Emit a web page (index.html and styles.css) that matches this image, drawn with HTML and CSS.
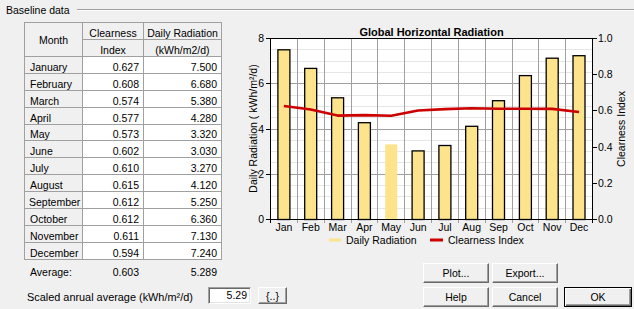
FILE: index.html
```html
<!DOCTYPE html>
<html>
<head>
<meta charset="utf-8">
<link rel="stylesheet" href="styles.css">
</head>
<body>
<div class="dialog">
  <div class="group-head"><span class="group-title">Baseline data</span><div class="rule"></div></div>
  <div class="top">
    <div class="left">
      <div class="grid">
        <div class="cell fixed span2 center">Month</div>
        <div class="cell fixed center">Clearness</div>
        <div class="cell fixed center">Daily Radiation</div>
        <div class="cell fixed center">Index</div>
        <div class="cell fixed center">(kWh/m2/d)</div>

        <div class="cell fixed">January</div><div class="cell num">0.627</div><div class="cell num">7.500</div>
        <div class="cell fixed">February</div><div class="cell num">0.608</div><div class="cell num">6.680</div>
        <div class="cell fixed">March</div><div class="cell num">0.574</div><div class="cell num">5.380</div>
        <div class="cell fixed">April</div><div class="cell num">0.577</div><div class="cell num">4.280</div>
        <div class="cell fixed">May</div><div class="cell num">0.573</div><div class="cell num">3.320</div>
        <div class="cell fixed">June</div><div class="cell num">0.602</div><div class="cell num">3.030</div>
        <div class="cell fixed">July</div><div class="cell num">0.610</div><div class="cell num">3.270</div>
        <div class="cell fixed">August</div><div class="cell num">0.615</div><div class="cell num">4.120</div>
        <div class="cell fixed clip">September</div><div class="cell num">0.612</div><div class="cell num">5.250</div>
        <div class="cell fixed">October</div><div class="cell num">0.612</div><div class="cell num">6.360</div>
        <div class="cell fixed">November</div><div class="cell num">0.611</div><div class="cell num">7.130</div>
        <div class="cell fixed">December</div><div class="cell num">0.594</div><div class="cell num">7.240</div>
      </div>
    </div>
    <svg class="chart" width="394" height="239" viewBox="240 20 394 239" xmlns="http://www.w3.org/2000/svg">
      <text class="ctitle" x="431.5" y="36" text-anchor="middle">Global Horizontal Radiation</text>
      <rect x="270.5" y="38.5" width="322" height="181" fill="#ffffff"/>
      <g stroke="#e6e6e6" stroke-width="1">
        <line x1="271" y1="208.5" x2="592" y2="208.5"/>
        <line x1="271" y1="196.5" x2="592" y2="196.5"/>
        <line x1="271" y1="185.5" x2="592" y2="185.5"/>
        <line x1="271" y1="162.5" x2="592" y2="162.5"/>
        <line x1="271" y1="151.5" x2="592" y2="151.5"/>
        <line x1="271" y1="140.5" x2="592" y2="140.5"/>
        <line x1="271" y1="117.5" x2="592" y2="117.5"/>
        <line x1="271" y1="106.5" x2="592" y2="106.5"/>
        <line x1="271" y1="95.5" x2="592" y2="95.5"/>
        <line x1="271" y1="72.5" x2="592" y2="72.5"/>
        <line x1="271" y1="61.5" x2="592" y2="61.5"/>
        <line x1="271" y1="49.5" x2="592" y2="49.5"/>
      </g>
      <g stroke="#a0a0a0" stroke-width="1">
        <line x1="271" y1="174.5" x2="592" y2="174.5"/>
        <line x1="271" y1="129.5" x2="592" y2="129.5"/>
        <line x1="271" y1="83.5" x2="592" y2="83.5"/>
        <line x1="297.5" y1="39" x2="297.5" y2="223"/>
        <line x1="324.5" y1="39" x2="324.5" y2="223"/>
        <line x1="351.5" y1="39" x2="351.5" y2="223"/>
        <line x1="377.5" y1="39" x2="377.5" y2="223"/>
        <line x1="404.5" y1="39" x2="404.5" y2="223"/>
        <line x1="431.5" y1="39" x2="431.5" y2="223"/>
        <line x1="458.5" y1="39" x2="458.5" y2="223"/>
        <line x1="485.5" y1="39" x2="485.5" y2="223"/>
        <line x1="512.5" y1="39" x2="512.5" y2="223"/>
        <line x1="538.5" y1="39" x2="538.5" y2="223"/>
        <line x1="565.5" y1="39" x2="565.5" y2="223"/>
      </g>
      <g fill="#fde38b" stroke="#000" stroke-width="1.3">
        <rect x="277.9" y="49.8" width="12" height="169.7"/>
        <rect x="304.7" y="68.4" width="12" height="151.1"/>
        <rect x="331.6" y="97.8" width="12" height="121.7"/>
        <rect x="358.4" y="122.7" width="12" height="96.8"/>
        <rect x="385.2" y="144.4" width="12" height="75.1" stroke="none"/>
        <rect x="412.1" y="150.9" width="12" height="68.6"/>
        <rect x="438.9" y="145.5" width="12" height="74.0"/>
        <rect x="465.7" y="126.3" width="12" height="93.2"/>
        <rect x="492.5" y="100.7" width="12" height="118.8"/>
        <rect x="519.4" y="75.6" width="12" height="143.9"/>
        <rect x="546.2" y="58.2" width="12" height="161.3"/>
        <rect x="573.0" y="55.7" width="12" height="163.8"/>
      </g>
      <polyline fill="none" stroke="#cc0000" stroke-width="2.6" stroke-linejoin="round"
        points="283.9,106 310.7,109.5 337.6,115.6 364.4,115.1 391.2,115.8 418.1,110.5 444.9,109.1 471.7,108.2 498.5,108.7 525.4,108.7 552.2,108.9 579,112"/>
      <rect x="270.5" y="38.5" width="322" height="181" fill="none" stroke="#000" stroke-width="1"/>
      <g stroke="#000" stroke-width="1">
        <line x1="266" y1="219.5" x2="270.5" y2="219.5"/>
        <line x1="266" y1="174.5" x2="270.5" y2="174.5"/>
        <line x1="266" y1="129.5" x2="270.5" y2="129.5"/>
        <line x1="266" y1="83.5" x2="270.5" y2="83.5"/>
        <line x1="266" y1="38.5" x2="270.5" y2="38.5"/>
        <line x1="592.5" y1="219.5" x2="597" y2="219.5"/>
        <line x1="592.5" y1="183.5" x2="597" y2="183.5"/>
        <line x1="592.5" y1="147.5" x2="597" y2="147.5"/>
        <line x1="592.5" y1="110.5" x2="597" y2="110.5"/>
        <line x1="592.5" y1="74.5" x2="597" y2="74.5"/>
        <line x1="592.5" y1="38.5" x2="597" y2="38.5"/>
        <line x1="270.5" y1="219.5" x2="270.5" y2="223"/>
        <line x1="592.5" y1="219.5" x2="592.5" y2="223"/>
      </g>
      <g class="clabel" text-anchor="end">
        <text x="264" y="223.3">0</text>
        <text x="264" y="178.3">2</text>
        <text x="264" y="133.3">4</text>
        <text x="264" y="87.3">6</text>
        <text x="264" y="42.3">8</text>
      </g>
      <g class="clabel">
        <text x="598" y="223.3">0.0</text>
        <text x="598" y="187.3">0.2</text>
        <text x="598" y="151.3">0.4</text>
        <text x="598" y="114.3">0.6</text>
        <text x="598" y="78.3">0.8</text>
        <text x="598" y="42.3">1.0</text>
      </g>
      <g class="clabel" text-anchor="middle">
        <text x="283.9" y="231">Jan</text>
        <text x="310.7" y="231">Feb</text>
        <text x="337.6" y="231">Mar</text>
        <text x="364.4" y="231">Apr</text>
        <text x="391.2" y="231">May</text>
        <text x="418.1" y="231">Jun</text>
        <text x="444.9" y="231">Jul</text>
        <text x="471.7" y="231">Aug</text>
        <text x="498.5" y="231">Sep</text>
        <text x="525.4" y="231">Oct</text>
        <text x="552.2" y="231">Nov</text>
        <text x="579" y="231">Dec</text>
      </g>
      <text class="clabel" text-anchor="middle" transform="translate(256.5,128.5) rotate(-90)">Daily Radiation ( kWh/m²/d)</text>
      <text class="clabel" text-anchor="middle" transform="translate(625,129) rotate(-90)">Clearness Index</text>
      <line x1="329" y1="240" x2="341" y2="240" stroke="#fde38b" stroke-width="3"/>
      <text class="clabel" x="346" y="244">Daily Radiation</text>
      <line x1="430" y1="240" x2="443" y2="240" stroke="#cc0000" stroke-width="3"/>
      <text class="clabel" x="448" y="244">Clearness Index</text>
    </svg>
  </div>
  <div class="bottom">
    <div class="avg">
      <div class="avg-label">Average:</div>
      <div class="avg-num">0.603</div>
      <div class="avg-num">5.289</div>
    </div>
    <div class="scaled">
      <span class="scaled-label">Scaled anrual average (kWh/m²/d)</span>
      <div class="edit">5.29</div>
      <div class="btn small">{..}</div>
    </div>
    <div class="buttons">
      <div class="btn">Plot...</div>
      <div class="btn">Export...</div>
      <div class="empty"></div>
      <div class="btn">Help</div>
      <div class="btn">Cancel</div>
      <div class="btn default">OK</div>
    </div>
  </div>
</div>
</body>
</html>
```

FILE: styles.css
```css
html, body {
  margin: 0;
  padding: 0;
  background: #f0f0f0;
}

.dialog {
  width: 634px;
  height: 309px;
  overflow: hidden;
  background: #f0f0f0;
  font-family: "Liberation Sans", Arial, sans-serif;
  font-size: 10.5px;
  color: #000;
  display: flex;
  flex-direction: column;
}

.group-head {
  height: 20px;
  display: flex;
  align-items: center;
  padding-left: 6px;
}

.group-title {
  line-height: 12px;
}

.rule {
  flex: 1;
  height: 0;
  margin-left: 7px;
  border-top: 1px solid #a0a0a0;
  border-bottom: 1px solid #ffffff;
}

.top {
  display: flex;
  height: 239px;
}

.left {
  width: 221px;
  flex: none;
}

.grid {
  box-sizing: border-box;
  margin-top: 2px;
  margin-left: 24px;
  width: 198px;
  display: grid;
  grid-template-columns: 58px 61px 78px;
  grid-template-rows: 17px 17px repeat(12, 16.9px);
  border-top: 1px solid #a0a0a0;
  border-left: 1px solid #a0a0a0;
}

.cell {
  box-sizing: border-box;
  border-right: 1px solid #a0a0a0;
  border-bottom: 1px solid #a0a0a0;
  background: #ffffff;
  line-height: 12px;
  display: flex;
  align-items: flex-end;
  padding: 0 4px 0 5px;
  white-space: nowrap;
  overflow: hidden;
}

.cell.fixed {
  background: #f0f0f0;
}

.cell.center {
  justify-content: center;
  padding: 0;
}

.cell.span2 {
  grid-row: span 2;
  align-items: center;
}

.cell.num {
  justify-content: flex-end;
}

.cell.clip {
  padding-left: 4px;
}

.chart {
  display: block;
  margin-left: 19px;
  flex: none;
}

.ctitle {
  font-family: "Liberation Sans", Arial, sans-serif;
  font-weight: bold;
  font-size: 11px;
  fill: #000;
}

.clabel {
  font-family: "Liberation Sans", Arial, sans-serif;
  font-size: 10.5px;
  fill: #000;
}

.bottom {
  display: grid;
  grid-template-columns: 1fr auto;
  grid-template-rows: 20px 20px;
  row-gap: 4px;
  padding: 4px 2px 0 0;
}

.avg {
  grid-column: 1;
  grid-row: 1;
  display: grid;
  grid-template-columns: 58px 61px 78px;
  margin-left: 25px;
  padding-top: 3px;
  line-height: 12px;
  align-self: start;
}

.avg-label {
  padding-left: 5px;
}

.avg-num {
  text-align: right;
  padding-right: 5px;
}

.scaled {
  grid-column: 1;
  grid-row: 2;
  display: flex;
  align-items: center;
  margin-left: 27px;
}

.scaled-label {
  width: 181px;
  font-size: 10.9px;
  line-height: 12px;
  flex: none;
}

.edit {
  box-sizing: border-box;
  align-self: flex-start;
  width: 43px;
  height: 17px;
  background: #ffffff;
  border: 1px solid;
  border-color: #a0a0a0 #ffffff #ffffff #a0a0a0;
  box-shadow: inset 1px 1px 0 #696969, inset -1px -1px 0 #e3e3e3;
  text-align: right;
  padding-right: 3px;
  line-height: 14px;
}

.btn {
  box-sizing: border-box;
  height: 20px;
  background: #f0f0f0;
  border: 1px solid;
  border-color: #ffffff #696969 #696969 #ffffff;
  box-shadow: inset -1px -1px 0 #a0a0a0;
  display: flex;
  align-items: center;
  justify-content: center;
  line-height: 12px;
}

.btn.small {
  align-self: flex-start;
  width: 29px;
  height: 17px;
  margin-left: 7px;
}

.buttons {
  grid-column: 2;
  grid-row: 1 / span 2;
  display: grid;
  grid-template-columns: 66px 66px 71px;
  grid-template-rows: 20px 20px;
  column-gap: 3px;
  row-gap: 4px;
}

.btn.default {
  margin-left: 3px;
  border: 1px solid #000000;
  box-shadow: inset 1px 1px 0 #ffffff, inset -1px -1px 0 #696969, inset -2px -2px 0 #a0a0a0;
}
```
